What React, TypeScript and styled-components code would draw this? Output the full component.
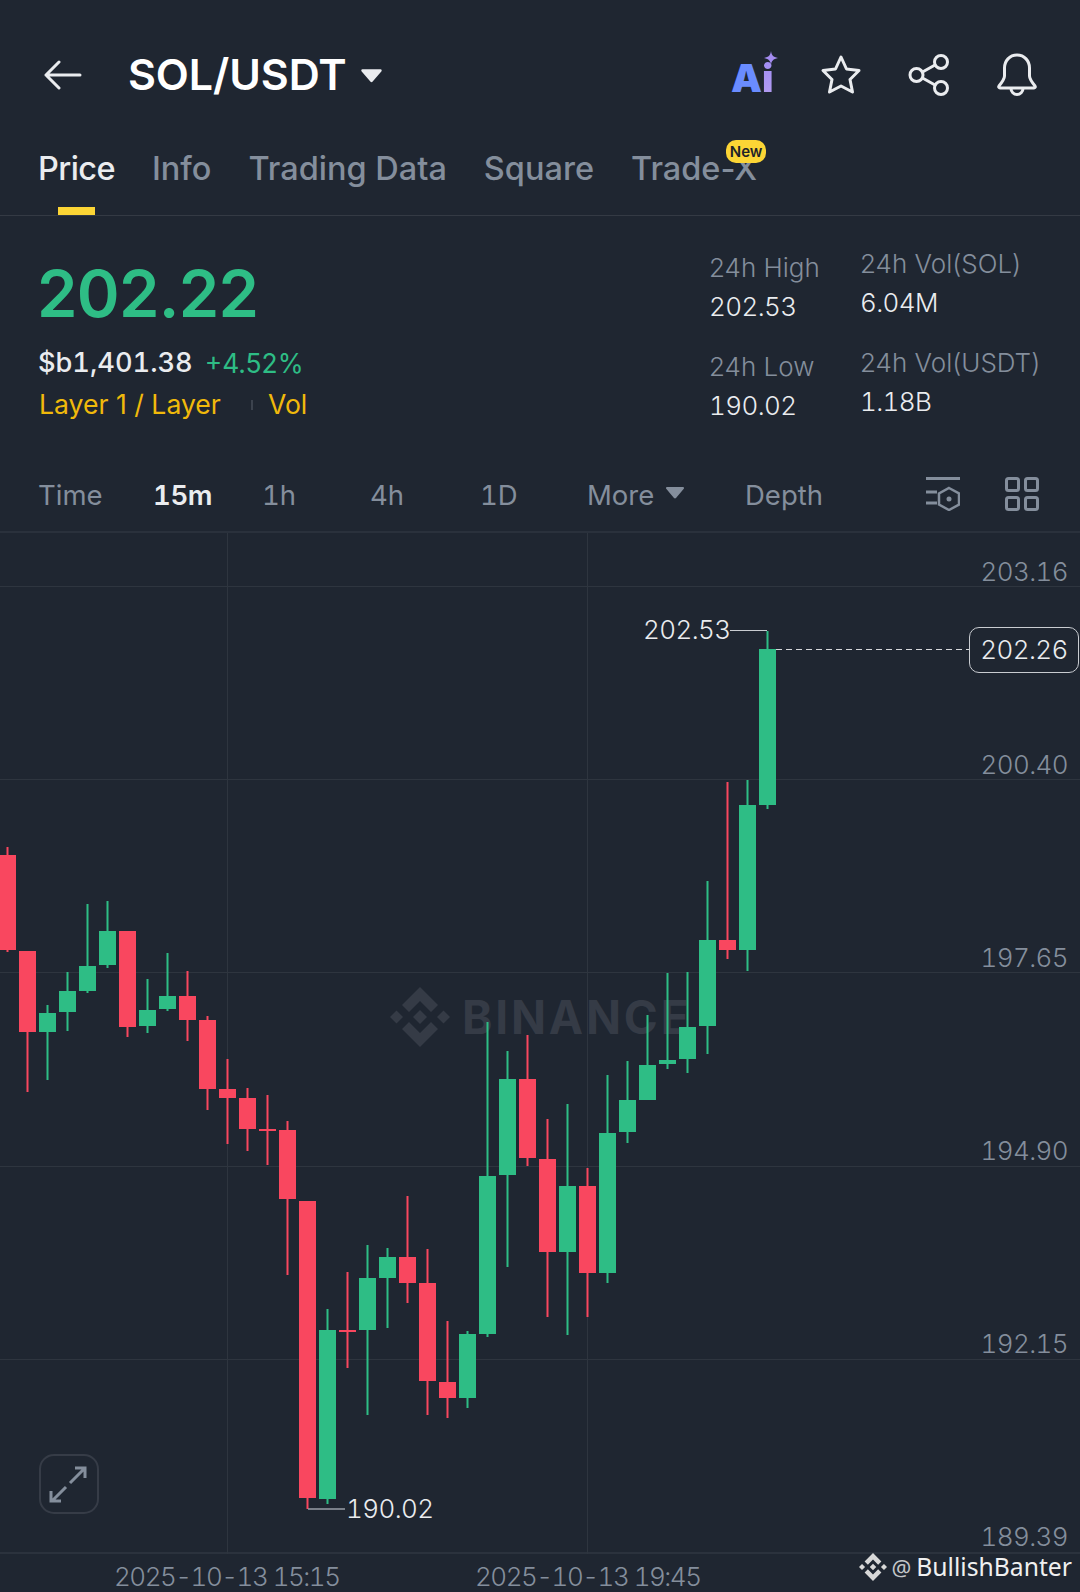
import React from 'react';
import styled, { createGlobalStyle } from 'styled-components';

const BG = '#1f2631';
const GREEN = '#2ebd85';
const RED = '#f9475f';
const GREY = '#848e9c';
const WHITE = '#eaecef';
const GRID = '#2e353f';
const CHART_TOP = 533;

// up, high, body top, body bottom, low (page y)
type Candle = [boolean, number, number, number, number];

const candles: Candle[] = [
  [false, 847, 855, 950, 952],
  [false, 951, 951, 1032, 1092],
  [true, 1005, 1013, 1032, 1080],
  [true, 972, 991, 1012, 1031],
  [true, 904, 966, 991, 993],
  [true, 901, 931, 965, 968],
  [false, 931, 931, 1027, 1037],
  [true, 979, 1010, 1026, 1033],
  [true, 953, 996, 1009, 1011],
  [false, 971, 996, 1020, 1041],
  [false, 1016, 1020, 1089, 1110],
  [false, 1059, 1089, 1098, 1144],
  [false, 1088, 1098, 1129, 1151],
  [false, 1095, 1129, 1131, 1165],
  [false, 1121, 1130, 1199, 1275],
  [false, 1201, 1201, 1498, 1509],
  [true, 1309, 1330, 1499, 1504],
  [false, 1272, 1330, 1332, 1368],
  [true, 1245, 1278, 1330, 1415],
  [true, 1248, 1257, 1278, 1328],
  [false, 1196, 1257, 1283, 1303],
  [false, 1249, 1283, 1381, 1415],
  [false, 1321, 1382, 1398, 1418],
  [true, 1331, 1334, 1398, 1408],
  [true, 1022, 1176, 1334, 1337],
  [true, 1051, 1079, 1175, 1267],
  [false, 1035, 1079, 1158, 1166],
  [false, 1119, 1159, 1252, 1317],
  [true, 1104, 1186, 1252, 1335],
  [false, 1168, 1186, 1273, 1317],
  [true, 1075, 1133, 1273, 1283],
  [true, 1061, 1100, 1132, 1143],
  [true, 1015, 1065, 1100, 1100],
  [true, 973, 1060, 1064, 1069],
  [true, 972, 1027, 1059, 1073],
  [true, 881, 940, 1026, 1054],
  [false, 782, 940, 950, 959],
  [true, 780, 805, 950, 971],
  [true, 631, 649, 805, 809],
];

const GlobalStyle = createGlobalStyle`
  html, body {
    margin: 0;
    padding: 0;
    background: ${BG};
  }
  * {
    box-sizing: border-box;
  }
`;

const Page = styled.div`
  width: 1080px;
  height: 1592px;
  overflow: hidden;
  background: ${BG};
  color: ${WHITE};
  font-family: 'Inter', 'Open Sans', sans-serif;
  display: flex;
  flex-direction: column;
`;

const Header = styled.header`
  height: 130px;
  flex: none;
  display: flex;
  align-items: center;
  padding: 20px 42px 0 44px;
`;

const BackIcon = styled.svg`
  width: 38px;
  height: 30px;
  flex: none;
  margin-right: 46px;
`;

const Title = styled.h1`
  margin: -3px 0 0;
  font-size: 43px;
  line-height: 50px;
  font-weight: 600;
  letter-spacing: -0.1px;
  color: #fff;
`;

const TitleCaret = styled.svg`
  width: 21px;
  height: 14px;
  margin-left: 14px;
  margin-top: 2px;
`;

const HeaderIcons = styled.div`
  margin-left: auto;
  display: flex;
  align-items: center;
  gap: 46px;
`;

const AiMark = styled.div`
  position: relative;
  width: 45px;
  height: 42px;
  margin: 6px -2px 0 0;
  font-size: 39px;
  line-height: 42px;
  font-weight: 900;
  color: #6a8cff;
`;

const AiLetter = styled.span`
  background: linear-gradient(180deg, #9d8bf5, #b59df0);
  -webkit-background-clip: text;
  background-clip: text;
  color: transparent;
`;

const Sparkle = styled.svg`
  position: absolute;
  right: -2px;
  top: -6px;
  width: 14px;
  height: 14px;
`;

const IconSvg = styled.svg`
  width: 42px;
  height: 44px;
  flex: none;
  fill: none;
  stroke: ${WHITE};
  stroke-width: 3;
  stroke-linejoin: round;
  stroke-linecap: round;
`;

const Tabs = styled.nav`
  height: 86px;
  flex: none;
  display: flex;
  gap: 37px;
  padding: 16px 0 0 38px;
  border-bottom: 1px solid #343a44;
`;

const Tab = styled.div<{ $active?: boolean }>`
  position: relative;
  height: 69px;
  font-size: 32.5px;
  line-height: 46px;
  font-weight: 500;
  letter-spacing: ${(p) => (p.$active ? '-0.6px' : '0')};
  color: ${(p) => (p.$active ? WHITE : GREY)};

  ${(p) =>
    p.$active &&
    `&::after {
      content: '';
      position: absolute;
      left: 20px;
      bottom: 0;
      width: 37px;
      height: 8px;
      background: #fcd535;
    }`}
`;

const NewBadge = styled.span`
  position: absolute;
  right: -9px;
  top: -6px;
  width: 40px;
  height: 23px;
  border-radius: 10px;
  background: #fcd535;
  color: #1e2329;
  font-size: 15px;
  line-height: 23px;
  font-weight: 600;
  letter-spacing: 0;
  text-align: center;
`;

const Stats = styled.section`
  height: 246px;
  flex: none;
  display: flex;
  justify-content: space-between;
  padding: 0 39px 0 39px;
`;

const PriceBlock = styled.div`
  display: flex;
  flex-direction: column;
  padding-top: 38px;
`;

const BigPrice = styled.div`
  margin-left: -2px;
  font-size: 65px;
  line-height: 80px;
  font-weight: 600;
  letter-spacing: -0.7px;
  color: ${GREEN};
`;

const SubRow = styled.div`
  display: flex;
  align-items: center;
  gap: 12px;
  margin-top: 11px;
  line-height: 36px;
`;

const Fiat = styled.span`
  margin-left: -1px;
  color: ${WHITE};
  font-size: 27.2px;
  font-weight: 500;
  font-variant-numeric: tabular-nums;
`;

const Change = styled.span`
  color: ${GREEN};
  font-size: 26.4px;
`;

const TagRow = styled.div`
  display: flex;
  align-items: center;
  margin-top: 5px;
  font-size: 26.6px;
  line-height: 36px;
  color: #f0b90b;
`;

const TagDivider = styled.span`
  width: 2px;
  height: 10px;
  background: #3c434e;
  margin: 2px 15px 0 30px;
`;

const StatColumns = styled.div`
  display: flex;
`;

const StatColumn = styled.div<{ $width: number; $offset: number }>`
  width: ${(p) => p.$width}px;
  padding-top: ${(p) => p.$offset}px;
  display: flex;
  flex-direction: column;
  gap: 24px;
`;

const StatItem = styled.div`
  display: flex;
  flex-direction: column;
  gap: 3px;
`;

const StatLabel = styled.div`
  font-size: 26px;
  line-height: 36px;
  font-weight: 300;
  color: ${GREY};
  white-space: nowrap;
`;

const StatValue = styled.div`
  font-size: 26px;
  line-height: 36px;
  font-weight: 300;
  letter-spacing: -0.6px;
  font-variant-numeric: tabular-nums;
  color: ${WHITE};
`;

const Toolbar = styled.div`
  height: 71px;
  flex: none;
  position: relative;
  display: flex;
  align-items: flex-start;
  padding: 15px 0 0 38px;
  border-bottom: 2px solid #2a313c;
`;

const Interval = styled.div<{ $width: number; $active?: boolean }>`
  width: ${(p) => p.$width}px;
  flex: none;
  font-size: 27.5px;
  line-height: 36px;
  font-weight: ${(p) => (p.$active ? 600 : 400)};
  font-variant-numeric: tabular-nums;
  letter-spacing: ${(p) => (p.$active ? '-0.4px' : '0')};
  color: ${(p) => (p.$active ? WHITE : GREY)};
  display: flex;
  align-items: center;
`;

const MoreCaret = styled.svg`
  width: 18px;
  height: 12px;
  margin-left: 12px;
  margin-top: -4px;
`;

const ToolIcons = styled.div`
  margin-left: auto;
  padding-right: 41px;
  display: flex;
  gap: 45px;
`;

const ToolIcon = styled.svg`
  width: 34px;
  height: 34px;
  fill: none;
  stroke: ${GREY};
  stroke-width: 3;
`;

const Chart = styled.div`
  position: relative;
  height: 1021px;
  flex: none;
  border-bottom: 2px solid #2b323d;
`;

const ChartCanvas = styled.svg`
  position: absolute;
  inset: 0;
  width: 1080px;
  height: 1021px;
`;

const WatermarkText = styled.text`
  font-family: 'Inter', sans-serif;
  font-size: 46px;
  font-weight: 700;
  letter-spacing: 2.8px;
  fill: #353b46;
`;

const YAxis = styled.div`
  position: absolute;
  top: 21px;
  right: 12px;
  display: flex;
  flex-direction: column;
  align-items: flex-end;
  gap: 157px;
`;

const YLabel = styled.div`
  font-size: 26px;
  line-height: 36px;
  font-weight: 300;
  letter-spacing: -0.6px;
  font-variant-numeric: tabular-nums;
  color: ${GREY};
`;

const CurrentPrice = styled.div`
  position: absolute;
  top: 94px;
  right: 1px;
  width: 110px;
  height: 46px;
  border: 1.5px solid #c9ccd1;
  border-radius: 10px;
  background: ${BG};
  font-size: 26px;
  line-height: 44px;
  font-weight: 300;
  letter-spacing: -0.6px;
  font-variant-numeric: tabular-nums;
  text-align: center;
  color: ${WHITE};
`;

const Extreme = styled.div<{ $left: number; $top: number }>`
  position: absolute;
  left: ${(p) => p.$left}px;
  top: ${(p) => p.$top}px;
  font-size: 26px;
  line-height: 36px;
  font-weight: 300;
  letter-spacing: -0.6px;
  font-variant-numeric: tabular-nums;
  color: ${WHITE};
`;

const ExpandButton = styled.button`
  position: absolute;
  left: 39px;
  top: 921px;
  width: 60px;
  height: 60px;
  padding: 0;
  border: 2px solid #363c47;
  border-radius: 15px;
  background: transparent;
`;

const ExpandIcon = styled.svg`
  display: block;
  width: 56px;
  height: 56px;
  fill: none;
  stroke: ${GREY};
  stroke-width: 3;
`;

const XAxis = styled.div`
  position: relative;
  flex: 1;
  display: flex;
  padding: 5px 0 0 114px;
  gap: 135px;
`;

const XLabel = styled.div`
  width: 226px;
  font-size: 26px;
  line-height: 36px;
  font-weight: 300;
  letter-spacing: -1.5px;
  font-variant-numeric: tabular-nums;
  color: ${GREY};
  white-space: nowrap;
`;

const Credit = styled.div`
  position: absolute;
  right: 8px;
  top: -3px;
  display: flex;
  align-items: center;
  font-family: 'Noto Sans', sans-serif;
  font-size: 24.7px;
  line-height: 32px;
  color: #f0f0f0;
`;

const CreditLogo = styled.svg`
  width: 28px;
  height: 28px;
  margin-right: 5px;
  fill: #d8d8d8;
`;

const CreditAt = styled.span`
  font-size: 22px;
  color: #c4c6c9;
  margin-right: 5px;
`;

const BinanceLogo = () => (
  <>
    <polygon points="30,23 37,30 30,37 23,30" />
    <polygon points="6.5,23.5 13,30 6.5,36.5 0,30" />
    <polygon points="53.5,23.5 60,30 53.5,36.5 47,30" />
    <polygon points="30,0 48,18 41,25 30,14 19,25 12,18" />
    <polygon points="30,60 48,42 41,35 30,46 19,35 12,42" />
  </>
);

const gridRows = [586, 779, 972, 1166, 1359];
const gridCols = [227, 587];
const yLabels = ['203.16', '200.40', '197.65', '194.90', '192.15', '189.39'];

const CandleChart = () => (
  <ChartCanvas viewBox={`0 ${CHART_TOP} 1080 1021`}>
    {gridRows.map((y) => (
      <rect key={y} x={0} y={y} width={1080} height={1} fill={GRID} />
    ))}
    {gridCols.map((x) => (
      <rect key={x} x={x} y={CHART_TOP} width={1} height={1021} fill={GRID} />
    ))}

    <g fill="#353b46" transform="translate(390 987)">
      <BinanceLogo />
    </g>
    <WatermarkText x={462} y={1034}>
      BINANCE
    </WatermarkText>

    {candles.map(([up, high, top, bottom, low], i) => {
      const cx = 7.5 + i * 20;
      const color = up ? GREEN : RED;
      return (
        <g key={i} fill={color}>
          <rect x={cx - 1} y={high} width={2} height={low - high} />
          <rect x={cx - 8.5} y={top} width={17} height={bottom - top} />
        </g>
      );
    })}

    {/* high / low markers */}
    <line x1={730} y1={630.5} x2={767} y2={630.5} stroke="#c9ccd1" strokeWidth={1} />
    <line x1={308} y1={1509} x2={345} y2={1509} stroke="#9a9fa8" strokeWidth={1.5} />
    <line x1={776} y1={649.5} x2={969} y2={649.5} stroke="#d5d7da" strokeWidth={1} strokeDasharray="6 4" />
  </ChartCanvas>
);

export default function App() {
  return (
    <Page>
      <GlobalStyle />
      <Header>
        <BackIcon viewBox="0 0 38 30" fill="none" stroke={WHITE} strokeWidth={3} strokeLinecap="round" strokeLinejoin="round">
          <path d="M36 15H2M15 2 2 15l13 13" />
        </BackIcon>
        <Title>SOL/USDT</Title>
        <TitleCaret viewBox="0 0 22 14">
          <path d="M1.5 0h19c1 0 1.5 1 1 2L12 13c-.5.6-1.5.6-2 0L.5 2c-.5-1 0-2 1-2z" fill={WHITE} />
        </TitleCaret>
        <HeaderIcons>
          <AiMark>
            A<AiLetter>i</AiLetter>
            <Sparkle viewBox="0 0 14 14">
              <path d="M7 0c.6 4 2 6 7 7-5 1-6.4 3-7 7-.6-4-2-6-7-7 5-1 6.4-3 7-7z" fill="#a48cf0" />
            </Sparkle>
          </AiMark>
          <IconSvg viewBox="0 0 42 44">
            <polygon points="21,4 26.5,16 39,17.5 30,26.5 32.5,39 21,33 9.5,39 12,26.5 3,17.5 15.5,16" />
          </IconSvg>
          <IconSvg viewBox="0 0 42 44">
            <circle cx="33" cy="9" r="6.5" />
            <circle cx="8.5" cy="22" r="6.5" />
            <circle cx="33" cy="35" r="6.5" />
            <path d="M14.5 19 27 12M14.5 25 27 32" />
          </IconSvg>
          <IconSvg viewBox="0 0 42 44">
            <path d="M21 2c-7.5 0-12.5 6-12.5 13v8c0 3-1.5 5-5.5 10-.7 1 0 2 1 2h34c1 0 1.700-1 1-2-4-5-5.500-7-5.500-10v-8C33.500 8 28.500 2 21 2z" />
            <path d="M15 35.500a6 6 0 0 0 12 0" />
          </IconSvg>
        </HeaderIcons>
      </Header>

      <Tabs>
        <Tab $active>Price</Tab>
        <Tab>Info</Tab>
        <Tab>Trading Data</Tab>
        <Tab>Square</Tab>
        <Tab>
          Trade-X
          <NewBadge>New</NewBadge>
        </Tab>
      </Tabs>

      <Stats>
        <PriceBlock>
          <BigPrice>202.22</BigPrice>
          <SubRow>
            <Fiat>$b1,401.38</Fiat>
            <Change>+4.52%</Change>
          </SubRow>
          <TagRow>
            Layer 1 / Layer
            <TagDivider />
            Vol
          </TagRow>
        </PriceBlock>
        <StatColumns>
          <StatColumn $width={151} $offset={34}>
            <StatItem>
              <StatLabel>24h High</StatLabel>
              <StatValue>202.53</StatValue>
            </StatItem>
            <StatItem>
              <StatLabel>24h Low</StatLabel>
              <StatValue>190.02</StatValue>
            </StatItem>
          </StatColumn>
          <StatColumn $width={181} $offset={30}>
            <StatItem>
              <StatLabel>24h Vol(SOL)</StatLabel>
              <StatValue>6.04M</StatValue>
            </StatItem>
            <StatItem>
              <StatLabel>24h Vol(USDT)</StatLabel>
              <StatValue>1.18B</StatValue>
            </StatItem>
          </StatColumn>
        </StatColumns>
      </Stats>

      <Toolbar>
        <Interval $width={115}>Time</Interval>
        <Interval $width={109} $active>15m</Interval>
        <Interval $width={108}>1h</Interval>
        <Interval $width={110}>4h</Interval>
        <Interval $width={107}>1D</Interval>
        <Interval $width={158}>
          More
          <MoreCaret viewBox="0 0 18 12">
            <path d="M1 0h16c1 0 1.300 1 .8 1.800L10 11c-.5.6-1.500.6-2 0L.2 1.800C-.3 1 0 0 1 0z" fill={GREY} />
          </MoreCaret>
        </Interval>
        <Interval $width={100}>Depth</Interval>
        <ToolIcons>
          <ToolIcon viewBox="0 0 34 34">
            <path d="M0 1.500h34M0 15h11M0 26h11" />
            <path d="M23 11l10 5.500v11L23 33l-10-5.500v-11z" strokeWidth={2.500} />
            <circle cx="23" cy="22" r="2.500" fill={GREY} stroke="none" />
          </ToolIcon>
          <ToolIcon viewBox="0 0 34 34" strokeLinejoin="round">
            <rect x="1.500" y="1.500" width="12" height="12" rx="2" />
            <rect x="20.500" y="1.500" width="12" height="12" rx="2" />
            <rect x="1.500" y="20.500" width="12" height="12" rx="2" />
            <rect x="20.500" y="20.500" width="12" height="12" rx="2" />
          </ToolIcon>
        </ToolIcons>
      </Toolbar>

      <Chart>
        <CandleChart />
        <YAxis>
          {yLabels.map((label) => (
            <YLabel key={label}>{label}</YLabel>
          ))}
        </YAxis>
        <CurrentPrice>202.26</CurrentPrice>
        <Extreme $left={643} $top={79}>202.53</Extreme>
        <Extreme $left={346} $top={958}>190.02</Extreme>
        <ExpandButton aria-label="Expand">
          <ExpandIcon viewBox="0 0 56 56">
            <path d="M29 27 43 13M34 12h10v10M25 31 11 45M10 35v10h10" />
          </ExpandIcon>
        </ExpandButton>
      </Chart>

      <XAxis>
        <XLabel>2025-10-13 15:15</XLabel>
        <XLabel>2025-10-13 19:45</XLabel>
        <Credit>
          <CreditLogo viewBox="0 0 60 60">
            <BinanceLogo />
          </CreditLogo>
          <CreditAt>@</CreditAt>
          BullishBanter
        </Credit>
      </XAxis>
    </Page>
  );
}
